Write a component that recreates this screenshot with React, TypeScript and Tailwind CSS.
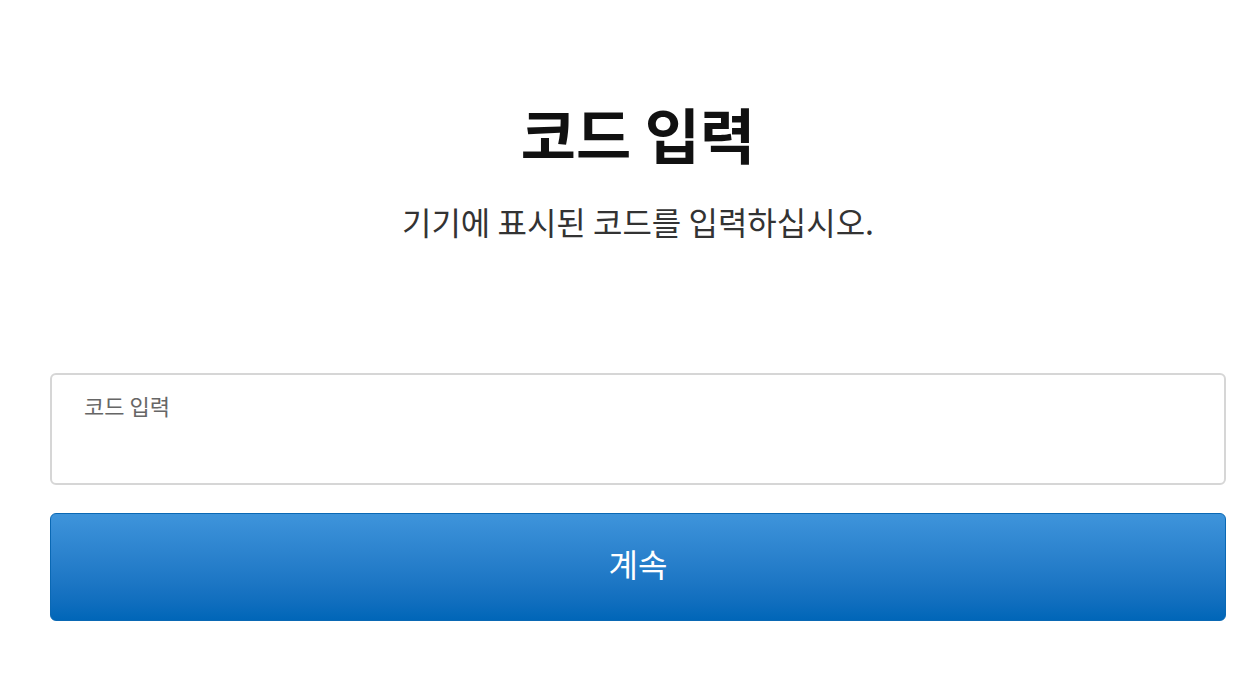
import React from "react";

export default function App() {
  return (
    <div
      className="w-full min-h-screen bg-white"
      style={{ fontFamily: '"Noto Sans CJK KR", "Noto Sans", sans-serif' }}
    >
      <div className="pl-[50px] pr-[33px] pt-[95px]">
        <h1 className="text-center text-[60px] leading-[76px] font-bold text-[#111111]">
          코드 입력
        </h1>
        <p className="mt-[28px] text-center text-[32px] leading-[44px] text-[#333333]">
          기기에 표시된 코드를 입력하십시오.
        </p>
        <div className="mt-[130px] h-[112px] rounded-[6px] border-2 border-[#d6d6d6] bg-white px-[32px] pt-[15px]">
          <div className="text-[22px] leading-[30px] text-[#666666]">코드 입력</div>
        </div>
        <button
          className="mt-[28px] flex h-[108px] w-full items-center justify-center rounded-[6px] border border-[#0a68b4] bg-gradient-to-b from-[#3e94db] to-[#0066b8] pb-[8px] text-[32px] text-white"
        >
          계속
        </button>
      </div>
    </div>
  );
}
